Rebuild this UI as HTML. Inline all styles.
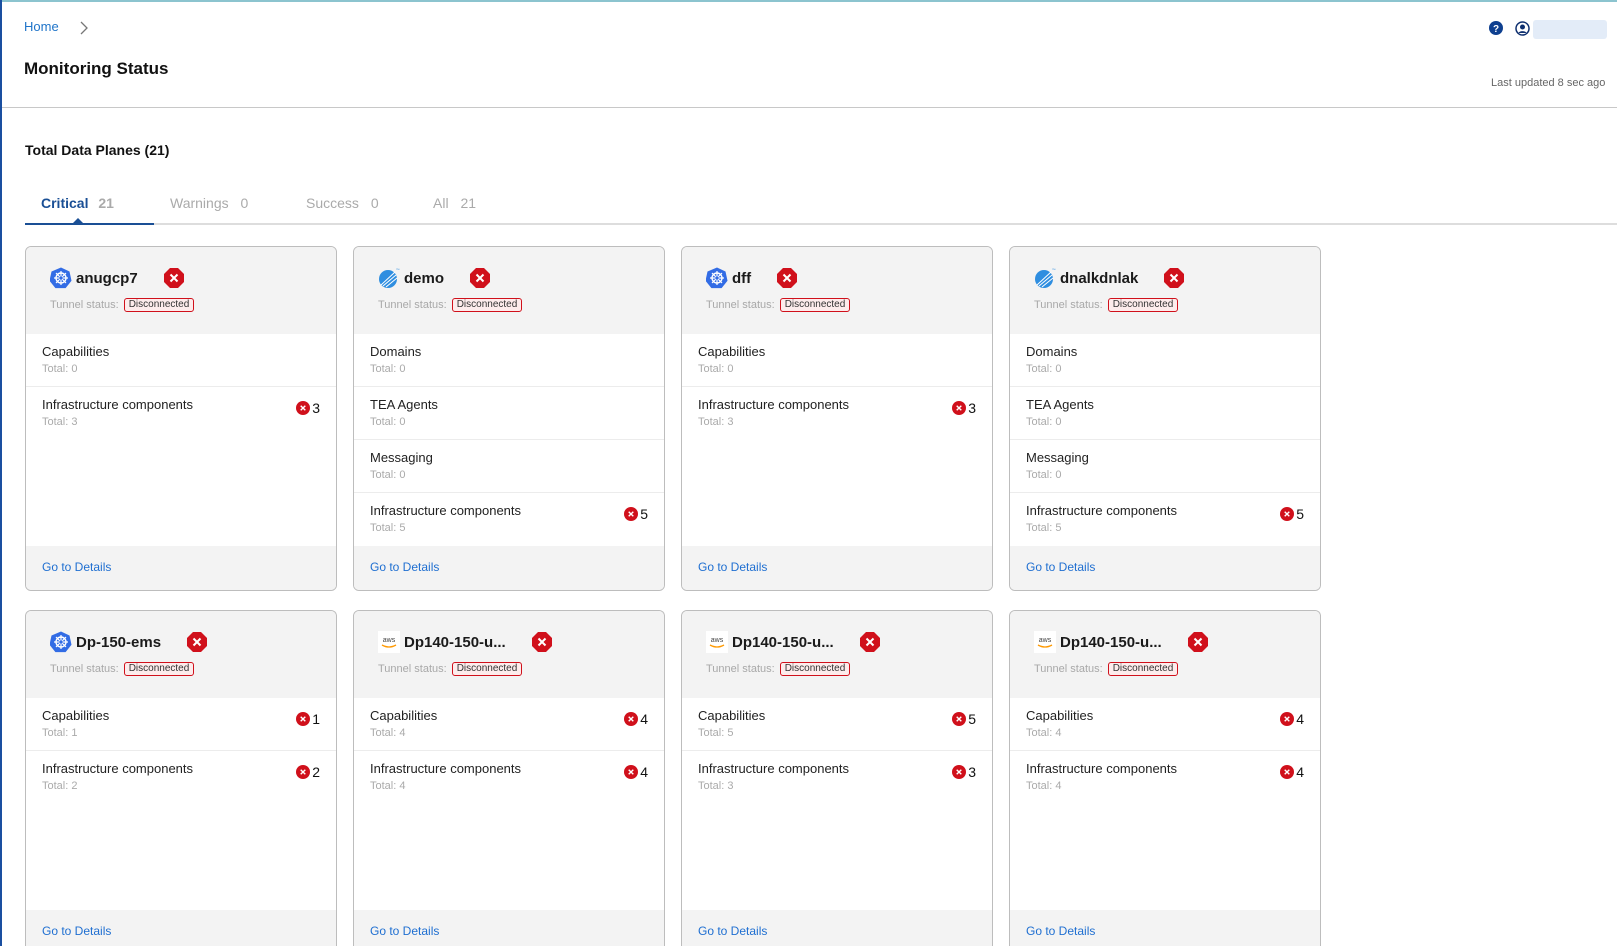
<!DOCTYPE html>
<html style="overflow:hidden;width:1617px;height:946px"><head><meta charset="utf-8"><style>
*{box-sizing:border-box;margin:0;padding:0}
body{width:1617px;height:946px;overflow:hidden;background:#fff;font-family:"Liberation Sans",Arial,sans-serif;position:relative;color:#1a1a1a}
.abs{position:absolute}
.card{position:absolute;width:312px;border:1px solid #bdbdbd;border-radius:6px;overflow:hidden;background:#fff}
.card.b{border-bottom:0;border-radius:6px 6px 0 0}
.hd{height:87px;background:#f3f3f3;position:relative}
.name{position:absolute;left:50px;top:20px;font-size:15px;font-weight:bold;display:flex;align-items:center;height:22px}
.logo{position:absolute;left:24px;top:20px;width:22px;height:22px}
.st{width:20px;height:20px;margin-left:26px;flex:none}
.tun{position:absolute;left:24px;top:51px;font-size:11px;color:#a8a8a8;display:flex;align-items:center}
.badge{margin-left:5px;border:1px solid #d0101b;border-radius:3px;background:#fdecec;color:#333;font-size:10px;padding:0 4px;height:14px;line-height:12px}
.row{height:53px;border-bottom:1px solid #ececec;position:relative;padding:10px 0 0 16px}
.row.l{border-bottom:0}
.row .t{font-size:13px;color:#222}
.row .s{font-size:11px;color:#aaa;margin-top:4px}
.cnt{position:absolute;right:16px;top:13px;display:flex;align-items:center;font-size:14px;color:#111}
.cnt svg{width:14px;height:14px;margin-right:2px}
.ft{position:absolute;left:0;right:0;height:44px;background:#f3f3f3;padding:14px 0 0 16px;font-size:12px;color:#1f6fd1}
</style></head><body>
<div class="abs" style="left:0;top:0;width:1617px;height:2px;background:#8cc4cf"></div>
<div class="abs" style="left:0;top:0;width:2px;height:946px;background:#1a4fa0"></div>
<div class="abs" style="left:24px;top:19px;font-size:13px;color:#1f74c9">Home</div>
<svg class="abs" style="left:79px;top:21px" width="10" height="14" viewBox="0 0 10 14"><path d="M2 1l6 6-6 6" fill="none" stroke="#777" stroke-width="1.3"/></svg>
<div class="abs" style="left:24px;top:59px;font-size:17px;font-weight:bold;color:#111">Monitoring Status</div>
<svg class="abs" style="left:1489px;top:21px" width="14" height="14" viewBox="0 0 14 14"><circle cx="7" cy="7" r="7" fill="#0e3f8f"/><text x="7" y="11" font-size="10" font-weight="bold" fill="#fff" text-anchor="middle" font-family="Liberation Sans">?</text></svg>
<svg class="abs" style="left:1515px;top:21px" width="15" height="15" viewBox="0 0 15 15"><circle cx="7.5" cy="7.5" r="6.5" fill="none" stroke="#0e2f6f" stroke-width="1.5"/><circle cx="7.5" cy="6" r="2.5" fill="#0e2f6f"/><path d="M3.5 12c1-2.5 7-2.5 8 0" fill="#0e2f6f"/></svg>
<div class="abs" style="left:1533px;top:20px;width:74px;height:19px;background:#e3ecf8;border-radius:3px"></div>
<div class="abs" style="left:1491px;top:77px;font-size:11px;color:#666">Last updated 8 sec ago</div>
<div class="abs" style="left:2px;top:107px;width:1615px;height:1px;background:#c8c8c8"></div>
<div class="abs" style="left:25px;top:142px;font-size:14px;font-weight:bold;color:#111">Total Data Planes (21)</div>
<div class="abs" style="left:41px;top:195px;font-size:14px;font-weight:bold;color:#1a4f95">Critical <span style="color:#aaa;margin-left:6px">21</span></div>
<div class="abs" style="left:170px;top:195px;font-size:14px;color:#aaa">Warnings <span style="margin-left:8px">0</span></div>
<div class="abs" style="left:306px;top:195px;font-size:14px;color:#aaa">Success <span style="margin-left:8px">0</span></div>
<div class="abs" style="left:433px;top:195px;font-size:14px;color:#aaa">All <span style="margin-left:8px">21</span></div>
<div class="abs" style="left:25px;top:223px;width:1592px;height:2px;background:#ddd"></div>
<div class="abs" style="left:25px;top:223px;width:129px;height:2px;background:#1a4f95"></div>
<div class="abs" style="left:73px;top:218px;width:0;height:0;border-left:5px solid transparent;border-right:5px solid transparent;border-bottom:5px solid #1a4f95"></div>

<svg width="0" height="0" style="position:absolute">
<defs>
<symbol id="oct" viewBox="0 0 20 20"><path d="M6 0h8l6 6v8l-6 6H6l-6-6V6z" fill="#d0101b"/><path d="M6.5 6.5l7 7M13.5 6.5l-7 7" stroke="#fff" stroke-width="2"/></symbol>
<symbol id="sm" viewBox="0 0 14 14"><circle cx="7" cy="7" r="7" fill="#d0101b"/><path d="M4.7 4.7l4.6 4.6M9.3 4.7l-4.6 4.6" stroke="#fff" stroke-width="1.4"/></symbol>
<symbol id="k8s" viewBox="0 0 22 22"><path d="M11 0.5l8.5 4 2 9.2-5.9 7.4H5.4L-0.5 13.7l2-9.2z" fill="#326ce5"/><circle cx="11" cy="11" r="5" fill="none" stroke="#fff" stroke-width="1.4"/><path d="M11 4v14M4 11h14M6 6l10 10M16 6L6 16" stroke="#fff" stroke-width="1.2"/><circle cx="11" cy="11" r="1.6" fill="#326ce5"/></symbol>
<symbol id="tib" viewBox="0 0 22 22"><circle cx="10" cy="12" r="9" fill="#2f8ee0"/><path d="M3 18L17 5M5 19L18 8M8 20L19 11" stroke="#fff" stroke-width="1"/><text x="18" y="4" font-size="3.5" fill="#2f8ee0">™</text></symbol>
<symbol id="aws" viewBox="0 0 22 22"><rect width="22" height="22" fill="#fff"/><text x="11" y="11" font-size="7" fill="#444" text-anchor="middle" font-family="Liberation Sans">aws</text><path d="M4 14q7 4 14 0" fill="none" stroke="#f90" stroke-width="1.3"/></symbol>
</defs></svg>

<div class="card" style="left:25px;top:246px;height:345px">
 <div class="hd"><svg class="logo"><use href="#k8s"/></svg><div class="name">anugcp7<svg class="st"><use href="#oct"/></svg></div><div class="tun">Tunnel status:<span class="badge">Disconnected</span></div></div>
 <div class="row"><div class="t">Capabilities</div><div class="s">Total: 0</div></div>
 <div class="row l"><div class="t">Infrastructure components</div><div class="s">Total: 3</div><div class="cnt"><svg><use href="#sm"/></svg>3</div></div>
 <div class="ft" style="top:299px">Go to Details</div>
</div>
<div class="card" style="left:353px;top:246px;height:345px">
 <div class="hd"><svg class="logo"><use href="#tib"/></svg><div class="name">demo<svg class="st"><use href="#oct"/></svg></div><div class="tun">Tunnel status:<span class="badge">Disconnected</span></div></div>
 <div class="row"><div class="t">Domains</div><div class="s">Total: 0</div></div>
 <div class="row"><div class="t">TEA Agents</div><div class="s">Total: 0</div></div>
 <div class="row"><div class="t">Messaging</div><div class="s">Total: 0</div></div>
 <div class="row l"><div class="t">Infrastructure components</div><div class="s">Total: 5</div><div class="cnt"><svg><use href="#sm"/></svg>5</div></div>
 <div class="ft" style="top:299px">Go to Details</div>
</div>
<div class="card" style="left:681px;top:246px;height:345px">
 <div class="hd"><svg class="logo"><use href="#k8s"/></svg><div class="name">dff<svg class="st"><use href="#oct"/></svg></div><div class="tun">Tunnel status:<span class="badge">Disconnected</span></div></div>
 <div class="row"><div class="t">Capabilities</div><div class="s">Total: 0</div></div>
 <div class="row l"><div class="t">Infrastructure components</div><div class="s">Total: 3</div><div class="cnt"><svg><use href="#sm"/></svg>3</div></div>
 <div class="ft" style="top:299px">Go to Details</div>
</div>
<div class="card" style="left:1009px;top:246px;height:345px">
 <div class="hd"><svg class="logo"><use href="#tib"/></svg><div class="name">dnalkdnlak<svg class="st"><use href="#oct"/></svg></div><div class="tun">Tunnel status:<span class="badge">Disconnected</span></div></div>
 <div class="row"><div class="t">Domains</div><div class="s">Total: 0</div></div>
 <div class="row"><div class="t">TEA Agents</div><div class="s">Total: 0</div></div>
 <div class="row"><div class="t">Messaging</div><div class="s">Total: 0</div></div>
 <div class="row l"><div class="t">Infrastructure components</div><div class="s">Total: 5</div><div class="cnt"><svg><use href="#sm"/></svg>5</div></div>
 <div class="ft" style="top:299px">Go to Details</div>
</div>

<div class="card b" style="left:25px;top:610px;height:336px">
 <div class="hd"><svg class="logo"><use href="#k8s"/></svg><div class="name">Dp-150-ems<svg class="st"><use href="#oct"/></svg></div><div class="tun">Tunnel status:<span class="badge">Disconnected</span></div></div>
 <div class="row"><div class="t">Capabilities</div><div class="s">Total: 1</div><div class="cnt"><svg><use href="#sm"/></svg>1</div></div>
 <div class="row l"><div class="t">Infrastructure components</div><div class="s">Total: 2</div><div class="cnt"><svg><use href="#sm"/></svg>2</div></div>
 <div class="ft" style="top:299px">Go to Details</div>
</div>
<div class="card b" style="left:353px;top:610px;height:336px">
 <div class="hd"><svg class="logo"><use href="#aws"/></svg><div class="name">Dp140-150-u...<svg class="st"><use href="#oct"/></svg></div><div class="tun">Tunnel status:<span class="badge">Disconnected</span></div></div>
 <div class="row"><div class="t">Capabilities</div><div class="s">Total: 4</div><div class="cnt"><svg><use href="#sm"/></svg>4</div></div>
 <div class="row l"><div class="t">Infrastructure components</div><div class="s">Total: 4</div><div class="cnt"><svg><use href="#sm"/></svg>4</div></div>
 <div class="ft" style="top:299px">Go to Details</div>
</div>
<div class="card b" style="left:681px;top:610px;height:336px">
 <div class="hd"><svg class="logo"><use href="#aws"/></svg><div class="name">Dp140-150-u...<svg class="st"><use href="#oct"/></svg></div><div class="tun">Tunnel status:<span class="badge">Disconnected</span></div></div>
 <div class="row"><div class="t">Capabilities</div><div class="s">Total: 5</div><div class="cnt"><svg><use href="#sm"/></svg>5</div></div>
 <div class="row l"><div class="t">Infrastructure components</div><div class="s">Total: 3</div><div class="cnt"><svg><use href="#sm"/></svg>3</div></div>
 <div class="ft" style="top:299px">Go to Details</div>
</div>
<div class="card b" style="left:1009px;top:610px;height:336px">
 <div class="hd"><svg class="logo"><use href="#aws"/></svg><div class="name">Dp140-150-u...<svg class="st"><use href="#oct"/></svg></div><div class="tun">Tunnel status:<span class="badge">Disconnected</span></div></div>
 <div class="row"><div class="t">Capabilities</div><div class="s">Total: 4</div><div class="cnt"><svg><use href="#sm"/></svg>4</div></div>
 <div class="row l"><div class="t">Infrastructure components</div><div class="s">Total: 4</div><div class="cnt"><svg><use href="#sm"/></svg>4</div></div>
 <div class="ft" style="top:299px">Go to Details</div>
</div>
</body></html>
